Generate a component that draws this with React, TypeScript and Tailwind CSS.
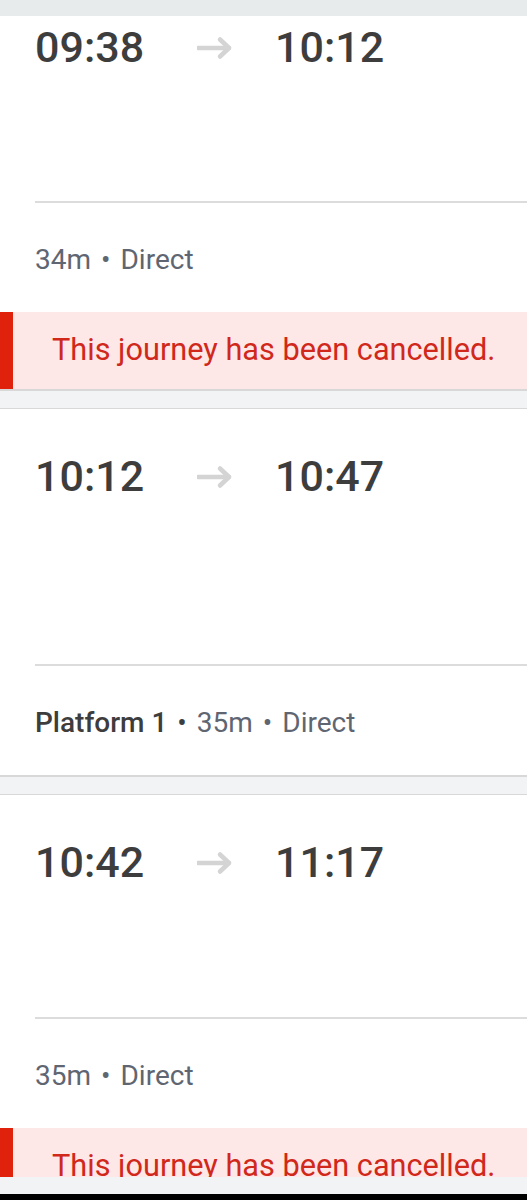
const font = { fontFamily: "Roboto, 'Noto Sans', sans-serif" };

type Journey = {
  dep: string;
  arr: string;
  platform?: string;
  duration: string;
  cancelled?: boolean;
  top: string;
  gap: string;
};

const journeys: Journey[] = [
  { dep: "09:38", arr: "10:12", duration: "34m", cancelled: true, top: "pt-[10px]", gap: "mt-[132px]" },
  { dep: "10:12", arr: "10:47", platform: "Platform 1", duration: "35m", top: "pt-[46px]", gap: "mt-[166px]" },
  { dep: "10:42", arr: "11:17", duration: "35m", cancelled: true, top: "pt-[46px]", gap: "mt-[133px]" },
];

function Arrow() {
  return (
    <svg width="36" height="24" viewBox="0 0 36 24" fill="none" className="shrink-0">
      <path d="M1 12h31" stroke="#d4d4d4" strokeWidth="4.5" strokeLinecap="round" />
      <path d="M23 3.5l9 8.5-9 8.5" stroke="#d4d4d4" strokeWidth="4.5" strokeLinecap="round" strokeLinejoin="round" />
    </svg>
  );
}

function JourneyCard({ j }: { j: Journey }) {
  return (
    <div className="bg-white">
      <div className={`pl-[35px] ${j.top}`}>
        <div className="flex items-center text-[43px] leading-none font-medium text-[#3d3d3d]">
          <span className="w-[162px]">{j.dep}</span>
          <Arrow />
          <span className="ml-[42px]">{j.arr}</span>
        </div>
        <div className={`h-[2px] bg-[#dcdcdc] ${j.gap}`} />
        <div className="mt-[43px] pb-[38px] text-[28px] leading-none text-[#5f6672]">
          {j.platform && (
            <>
              <span className="font-medium text-[#3d3d3d]">{j.platform}</span>
              <span className="mx-[10px] text-[#3d3d3d]">•</span>
            </>
          )}
          <span>{j.duration}</span>
          <span className="mx-[10px]">•</span>
          <span>Direct</span>
        </div>
      </div>
      {j.cancelled && (
        <div className="flex h-[77px] bg-[#fde7e7]">
          <div className="w-[13px] bg-[#e0220c]" />
          <div className="flex items-center pl-[39px] text-[30.7px] leading-none text-[#d0281b]">
            This journey has been cancelled.
          </div>
        </div>
      )}
    </div>
  );
}

export default function App() {
  return (
    <div className="flex h-[1200px] w-[527px] flex-col overflow-hidden bg-[#f2f3f5]" style={font}>
      <div className="h-[16px] shrink-0 bg-[#e8ebec]" />
      <div className="flex-1 overflow-hidden">
        {journeys.map((j, i) => (
          <div key={i}>
            {i > 0 && <div className="h-[20px] border-t-2 border-b border-[#d8d8d8] bg-[#f2f3f5]" />}
            <JourneyCard j={j} />
          </div>
        ))}
      </div>
      <div className="h-[17px] shrink-0 bg-[#f2f3f5]" />
      <div className="h-[6px] shrink-0 bg-black" />
    </div>
  );
}
